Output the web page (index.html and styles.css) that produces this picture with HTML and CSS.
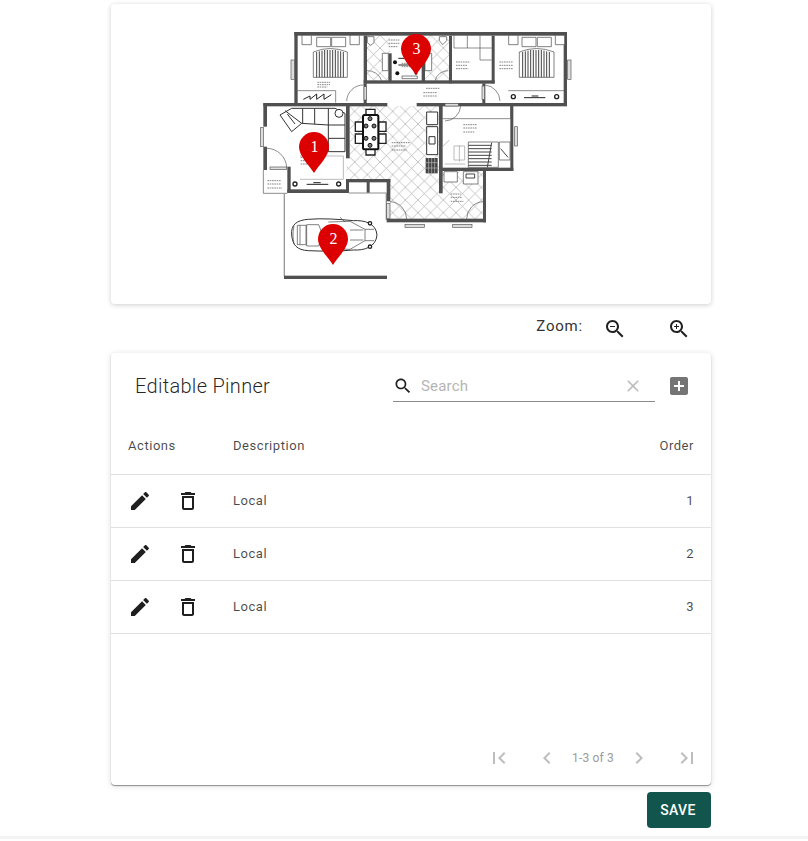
FILE: index.html
```html
<!DOCTYPE html>
<html lang="en">
<head>
<meta charset="utf-8">
<title>Editable Pinner</title>
<link rel="stylesheet" href="styles.css">
</head>
<body>
<svg class="defs" aria-hidden="true">
  <symbol id="i-zoom-out" viewBox="0 0 24 24"><path d="M15.5 14h-.79l-.28-.27C15.41 12.59 16 11.11 16 9.5 16 5.91 13.09 3 9.5 3S3 5.91 3 9.5 5.91 16 9.5 16c1.61 0 3.09-.59 4.23-1.57l.27.28v.79l5 4.99L20.49 19l-4.99-5zm-6 0C7.01 14 5 11.99 5 9.5S7.01 5 9.5 5 14 7.01 14 9.5 11.99 14 9.5 14zM7 9h5v1H7z"/></symbol>
  <symbol id="i-zoom-in" viewBox="0 0 24 24"><path d="M15.5 14h-.79l-.28-.27C15.41 12.59 16 11.11 16 9.5 16 5.91 13.09 3 9.5 3S3 5.91 3 9.5 5.91 16 9.5 16c1.61 0 3.09-.59 4.23-1.57l.27.28v.79l5 4.99L20.49 19l-4.99-5zm-6 0C7.01 14 5 11.99 5 9.5S7.01 5 9.5 5 14 7.01 14 9.5 11.99 14 9.5 14z"/><path d="M12 10h-2v2H9v-2H7V9h2V7h1v2h2v1z"/></symbol>
  <symbol id="i-search" viewBox="0 0 24 24"><path d="M15.5 14h-.79l-.28-.27C15.41 12.59 16 11.11 16 9.5 16 5.91 13.09 3 9.5 3S3 5.91 3 9.5 5.91 16 9.5 16c1.61 0 3.09-.59 4.23-1.57l.27.28v.79l5 4.99L20.49 19l-4.99-5zm-6 0C7.01 14 5 11.99 5 9.5S7.01 5 9.5 5 14 7.01 14 9.5 11.99 14 9.5 14z"/></symbol>
  <symbol id="i-clear" viewBox="0 0 24 24"><path d="M19 6.41L17.59 5 12 10.59 6.41 5 5 6.41 10.59 12 5 17.59 6.41 19 12 13.41 17.59 19 19 17.59 13.41 12z"/></symbol>
  <symbol id="i-add" viewBox="0 0 24 24"><path d="M19 3H5c-1.11 0-2 .9-2 2v14c0 1.1.89 2 2 2h14c1.1 0 2-.9 2-2V5c0-1.1-.9-2-2-2zm-2 10h-4v4h-2v-4H7v-2h4V7h2v4h4v2z"/></symbol>
  <symbol id="i-edit" viewBox="0 0 24 24"><path d="M3 17.25V21h3.75L17.81 9.94l-3.75-3.75L3 17.25zM20.71 7.04c.39-.39.39-1.02 0-1.41l-2.34-2.34c-.39-.39-1.02-.39-1.41 0l-1.83 1.83 3.75 3.75 1.83-1.83z"/></symbol>
  <symbol id="i-delete" viewBox="0 0 24 24"><path d="M6 19c0 1.1.9 2 2 2h8c1.1 0 2-.9 2-2V7H6v12zM8 9h8v10H8V9zm7.5-5l-1-1h-5l-1 1H5v2h14V4h-3.5z"/></symbol>
  <symbol id="i-first" viewBox="0 0 24 24"><path d="M18.41 16.59L13.82 12l4.59-4.59L17 6l-6 6 6 6zM6 6h2v12H6z"/></symbol>
  <symbol id="i-prev" viewBox="0 0 24 24"><path d="M15.41 7.41L14 6l-6 6 6 6 1.41-1.41L10.83 12z"/></symbol>
  <symbol id="i-next" viewBox="0 0 24 24"><path d="M10 6L8.59 7.41 13.17 12l-4.58 4.59L10 18l6-6z"/></symbol>
  <symbol id="i-last" viewBox="0 0 24 24"><path d="M5.59 7.41L10.18 12l-4.59 4.59L7 18l6-6-6-6zM16 6h2v12h-2z"/></symbol>
  <symbol id="i-pin" viewBox="0 0 30 41"><path d="M15 0A15 15 0 0 1 30 15C30 24 20 33 15 41C10 33 0 24 0 15A15 15 0 0 1 15 0Z"/></symbol>
</svg>

<main class="page">
  <section class="card map-card">
    <div class="map">
      <svg class="plan" viewBox="0 12 966 780" width="322" height="260" aria-hidden="true">
        <defs>
          <pattern id="hatch" width="38" height="38" patternUnits="userSpaceOnUse" patternTransform="translate(10 8)">
            <path class="hatch-line" d="M0 0L38 38M38 0L0 38"/>
          </pattern>
        </defs>
        <!-- tiled floors -->
        <polygon class="tile" points="298,258 568,258 568,452 705,452 705,600 420,600 420,480 290,480 290,415 298,415"/>
        <rect class="tile" x="350" y="46" width="70" height="136"/>
        <rect class="tile" x="520" y="46" width="78" height="136"/>
        <rect class="white" x="350" y="192" width="348" height="56"/>

        <!-- thin outlines -->
        <path class="thin" d="M40 450V520H112M296 519H410M612 46V84H725M652 46V84M690 46V120H725M578 296H782V258M143 212H257V248M775 212H942"/>
        <path class="garage" d="M103 520V768M409 520V600"/>

        <!-- walls -->
        <g class="wall">
          <rect x="133" y="36" width="818" height="11"/>
          <rect x="133" y="36" width="10" height="214"/>
          <rect x="941" y="36" width="10" height="222"/>
          <rect x="40" y="249" width="372" height="10"/>
          <rect x="500" y="249" width="451" height="10"/>
          <rect x="40" y="250" width="11" height="70"/>
          <rect x="40" y="380" width="11" height="70"/>
          <rect x="112" y="440" width="10" height="78"/>
          <rect x="112" y="508" width="184" height="11"/>
          <rect x="288" y="258" width="11" height="157"/>
          <rect x="288" y="477" width="133" height="10"/>
          <rect x="288" y="477" width="9" height="41"/>
          <rect x="350" y="477" width="9" height="41"/>
          <rect x="410" y="477" width="11" height="67"/>
          <rect x="410" y="596" width="298" height="11"/>
          <rect x="699" y="452" width="9" height="155"/>
          <rect x="567" y="258" width="11" height="262"/>
          <rect x="567" y="443" width="223" height="10"/>
          <rect x="781" y="258" width="9" height="195"/>
          <rect x="341" y="47" width="10" height="143"/>
          <rect x="341" y="181" width="393" height="10"/>
          <rect x="597" y="47" width="9" height="143"/>
          <rect x="725" y="47" width="9" height="143"/>
          <rect x="415" y="100" width="10" height="86"/>
          <rect x="515" y="100" width="10" height="86"/>
          <rect x="102" y="767" width="309" height="10"/>
          <rect x="341" y="190" width="9" height="60"/>
          <rect x="697" y="190" width="9" height="60"/>
        </g>

        <!-- doors and windows -->
        <path class="door" d="M290 243A50 50 0 0 1 342 195M750 243A50 50 0 0 0 706 195M585 303A48 48 0 0 0 632 258M50 385A60 60 0 0 1 110 442M420 545A52 52 0 0 1 470 597M650 597A52 52 0 0 1 700 545M350 152A45 45 0 0 1 395 182M595 152A40 40 0 0 0 555 182"/>
        <g class="win">
          <rect x="123" y="120" width="10" height="58"/>
          <rect x="953" y="120" width="10" height="58"/>
          <rect x="32" y="322" width="8" height="58"/>
          <rect x="794" y="320" width="8" height="58"/>
          <rect x="465" y="613" width="58" height="9"/>
          <rect x="608" y="613" width="58" height="9"/>
          <rect x="342" y="200" width="8" height="40"/>
          <rect x="696" y="198" width="8" height="40"/>
          <rect x="410" y="550" width="10" height="45"/>
          <rect x="585" y="250" width="40" height="8"/>
          <rect x="60" y="441" width="50" height="7"/>
        </g>

        <!-- bedroom left -->
        <path class="furn" d="M156 46H184V74H156ZM300 46H328V74H300ZM200 52H242V80H200ZM245 52H287V80H245ZM190 96Q240 75 292 96V172H190Z"/>
        <path class="stripes" d="M200 96V172M208 94V172M216 92V172M224 90V172M232 90V172M240 90V172M248 90V172M256 90V172M264 92V172M272 94V172M280 96V172"/>
        <path class="heavy" d="M160 238L180 228L180 238L200 222L200 238L222 222L222 238L244 224"/>
        <!-- bedroom right -->
        <path class="furn" d="M776 46H804V74H776ZM916 46H944V74H916ZM816 52H858V80H816ZM862 52H904V80H862ZM808 96Q860 75 912 96V172H808Z"/>
        <path class="stripes" d="M818 96V172M826 94V172M834 92V172M842 90V172M850 90V172M858 90V172M866 90V172M874 90V172M882 92V172M890 94V172M898 96V172"/>
        <path class="heavy" d="M822 233H886M845 228H865"/>
        <circle class="lamp" cx="790" cy="230" r="6"/>
        <circle class="lamp" cx="920" cy="230" r="6"/>

        <!-- bath -->
        <path class="furn" d="M352 50H372V68L362 76L352 68ZM568 50H590V62L578 74L568 62ZM397 100H415V152H397ZM525 100H545V152H525ZM456 168H502V176H456Z"/>
        <circle class="dot" cx="435" cy="127" r="6"/>
        <circle class="dot" cx="442" cy="160" r="6"/>
        <circle class="dot" cx="498" cy="160" r="4"/>
        <path class="heavy" d="M445 115H510M445 135H510"/>

        <!-- living room -->
        <path class="sofa" d="M90 285L125 265H255L285 280V395H235V315L155 310L125 335ZM155 310L105 272M235 315L285 315M158 266V310M194 266V312M235 266V315M235 355H285M112 282L135 312"/>
        <circle class="sofa" cx="267" cy="280" r="12"/>
        <path class="soft" d="M150 408H280V478H150"/>
        <circle class="lamp" cx="135" cy="492" r="6"/>
        <circle class="lamp" cx="266" cy="492" r="6"/>
        <path class="heavy" d="M170 493H235M190 488H212"/>

        <!-- dining -->
        <path class="chair" d="M316 306H338V334H316ZM316 342H338V370H316ZM386 306H408V334H386ZM386 342H408V370H386ZM348 268H375V285H348ZM348 388H375V405H348Z"/>
        <rect class="table" x="339" y="285" width="46" height="103" rx="5"/>
        <g class="plate">
          <circle cx="360" cy="296" r="6"/>
          <circle cx="348" cy="318" r="6"/><circle cx="372" cy="318" r="6"/>
          <circle cx="348" cy="355" r="6"/><circle cx="372" cy="355" r="6"/>
          <circle cx="360" cy="376" r="6"/>
        </g>

        <!-- kitchen counter -->
        <path class="counter" d="M530 276H563V314H530ZM530 320H563V404H530ZM537 350H555V372H537Z"/>
        <rect class="stove" x="527" y="414" width="36" height="46"/>
        <path class="stove-grid" d="M527 428H563M527 444H563M545 414V460M536 414V460M554 414V460"/>

        <!-- right room -->
        <path class="furn" d="M655 366H745V442H655ZM748 366H780V420H748Z"/>
        <path class="heavy-thin" d="M655 376H725M655 386H725M655 396H725M655 406H725M655 416H725M655 426H725M655 436H725M725 368L712 442M752 386L774 412"/>
        <path class="soft" d="M612 378H644V420H612ZM628 375V425M578 380L598 360M584 432H646"/>
        <path class="furn" d="M582 455H622V486H582ZM640 455H684V492H640Z"/>
        <path class="heavy-thin" d="M648 462H674V474H648Z"/>

        <!-- car -->
        <path class="car" d="M125 645C122 615 140 600 175 598C215 594 270 598 310 602C345 600 378 610 381 645C378 680 345 692 310 690C270 694 215 694 175 692C140 690 128 675 125 645Z"/>
        <path class="car-thin" d="M132 618C128 635 128 655 132 672M142 616H168V674H142ZM150 616V674M170 614H206L218 645L206 678H170ZM235 606L300 604L345 628V662L300 688L235 686M345 628H372M345 662H372M270 592L285 606M270 696L285 684M300 630H340M300 660H340"/>
        <circle class="lamp" cx="360" cy="610" r="5"/>
        <circle class="lamp" cx="360" cy="680" r="5"/>

        <!-- small labels as faint marks -->
        <path class="marks" d="M202 187H240M202 194H240M202 201H232M618 126H660M618 136H652M618 146H655M748 126H788M748 136H790M748 146H790M528 205H568M520 218H560M520 228H562M640 314H680M640 324H680M640 336H675M425 368H480M425 378H468M425 390H470M152 412H186M152 422H182M152 432H186M52 482H92M52 492H92M52 504H96M602 522H632M602 532H636M602 544H640M416 60H448M416 70H448M416 80H444M455 130H495M455 140H495"/>
      </svg>
      <span class="pin pin-one"><svg class="pin-shape"><use href="#i-pin"/></svg><b class="pin-num">1</b></span>
      <span class="pin pin-two"><svg class="pin-shape"><use href="#i-pin"/></svg><b class="pin-num">2</b></span>
      <span class="pin pin-three"><svg class="pin-shape"><use href="#i-pin"/></svg><b class="pin-num">3</b></span>
    </div>
  </section>

  <div class="zoom-row">
    <span class="zoom-label">Zoom:</span>
    <span class="zoom-btn"><svg class="icon"><use href="#i-zoom-out"/></svg></span>
    <span class="zoom-btn"><svg class="icon"><use href="#i-zoom-in"/></svg></span>
  </div>

  <section class="card table-card">
    <header class="toolbar">
      <h2 class="title">Editable Pinner</h2>
      <div class="search">
        <svg class="icon search-icon"><use href="#i-search"/></svg>
        <span class="placeholder">Search</span>
        <svg class="icon clear-icon"><use href="#i-clear"/></svg>
      </div>
      <svg class="icon add-icon"><use href="#i-add"/></svg>
    </header>

    <div class="row head">
      <span class="col-actions">Actions</span>
      <span class="col-desc">Description</span>
      <span class="col-order">Order</span>
    </div>
    <div class="row">
      <span class="col-actions"><svg class="icon"><use href="#i-edit"/></svg><svg class="icon"><use href="#i-delete"/></svg></span>
      <span class="col-desc">Local</span>
      <span class="col-order">1</span>
    </div>
    <div class="row">
      <span class="col-actions"><svg class="icon"><use href="#i-edit"/></svg><svg class="icon"><use href="#i-delete"/></svg></span>
      <span class="col-desc">Local</span>
      <span class="col-order">2</span>
    </div>
    <div class="row">
      <span class="col-actions"><svg class="icon"><use href="#i-edit"/></svg><svg class="icon"><use href="#i-delete"/></svg></span>
      <span class="col-desc">Local</span>
      <span class="col-order">3</span>
    </div>

    <footer class="pager">
      <span class="pager-btn"><svg class="icon"><use href="#i-first"/></svg></span>
      <span class="pager-btn"><svg class="icon"><use href="#i-prev"/></svg></span>
      <span class="pager-label">1-3 of 3</span>
      <span class="pager-btn"><svg class="icon"><use href="#i-next"/></svg></span>
      <span class="pager-btn"><svg class="icon"><use href="#i-last"/></svg></span>
    </footer>
  </section>

  <div class="actions">
    <button class="save" type="button">SAVE</button>
  </div>
</main>
<div class="page-end"></div>
</body>
</html>
```
FILE: styles.css
```css
* { box-sizing: border-box; }
html, body { margin: 0; padding: 0; }
body {
  background: #fff;
  font-family: Roboto, "Liberation Sans", sans-serif;
  color: rgba(0, 0, 0, .87);
  height: 841px;
  overflow: hidden;
}
.defs { width: 0; height: 0; position: absolute; }
.icon { width: 24px; height: 24px; display: block; fill: currentColor; }

.page { width: 600px; margin-left: 111px; padding-top: 4px; }
.card { background: #fff; border-radius: 4px; }

/* map */
.map-card {
  height: 300px;
  display: flex; align-items: center; justify-content: center;
  box-shadow: 0 1px 5px rgba(0,0,0,.2);
}
.map { position: relative; width: 322px; height: 260px; }
.plan { display: block; filter: blur(.35px); }
.tile { fill: url(#hatch); }
.hatch-line { stroke: #aaa; stroke-width: 2; fill: none; }
.white { fill: #fff; }
.wall rect { fill: #505050; }
.thin { fill: none; stroke: #555; stroke-width: 2; }
.garage { fill: none; stroke: #999; stroke-width: 4; }
.door { fill: none; stroke: #555; stroke-width: 2; }
.win rect { fill: #ddd; stroke: #555; stroke-width: 2; }
.furn { fill: #fff; stroke: #444; stroke-width: 2; }
.sofa { fill: #fff; stroke: #333; stroke-width: 3; }
.stripes { fill: none; stroke: #444; stroke-width: 3; }
.heavy { fill: none; stroke: #222; stroke-width: 3; }
.heavy-thin { fill: none; stroke: #444; stroke-width: 3; }
.soft { fill: none; stroke: #bbb; stroke-width: 3; }
.lamp { fill: #fff; stroke: #222; stroke-width: 4; }
.dot { fill: #111; }
.table { fill: #fff; stroke: #111; stroke-width: 6; }
.chair { fill: #fff; stroke: #222; stroke-width: 4; }
.plate circle { fill: #777; stroke: #111; stroke-width: 3; }
.counter { fill: #fff; stroke: #333; stroke-width: 3; }
.stove { fill: #444; }
.stove-grid { fill: none; stroke: #bbb; stroke-width: 2; }
.car { fill: #fff; stroke: #333; stroke-width: 3; }
.car-thin { fill: none; stroke: #444; stroke-width: 2; }
.marks { fill: none; stroke: #888; stroke-width: 3; stroke-dasharray: 5 2; }

.pin { position: absolute; width: 30px; height: 41px; }
.pin-one { left: 49px; top: 108px; }
.pin-two { left: 68px; top: 200px; }
.pin-three { left: 151px; top: 10px; }
.pin-shape { display: block; width: 30px; height: 41px; fill: #dd0000; }
.pin-num {
  position: absolute;
  left: 1px; right: 0; top: 5px;
  text-align: center;
  color: #fff;
  font: 400 16px/20px "Liberation Serif", serif;
}

/* zoom row */
.zoom-row { display: flex; align-items: center; justify-content: flex-end; height: 49px; color: #222; }
.zoom-label { font-size: 15px; font-weight: 400; letter-spacing: .8px; position: relative; top: -3px; color: #333; }
.zoom-btn { width: 64px; display: flex; justify-content: center; }

/* table */
.table-card {
  height: 432px;
  display: flex; flex-direction: column;
  box-shadow: 0 1px 1px rgba(0,0,0,.4), 0 1px 6px rgba(0,0,0,.14);
}
.toolbar { height: 64px; display: flex; align-items: center; padding: 2px 0 0 24px; flex: none; }
.title { margin: 0; font-size: 20px; font-weight: 300; letter-spacing: .3px; width: 258px; }
.search {
  width: 262px; height: 32px;
  display: flex; align-items: center;
  border-bottom: 1px solid #8c8c8c;
  color: #222;
}
.search-icon { width: 20px; height: 20px; }
.placeholder { margin-left: 8px; font-size: 15px; letter-spacing: .2px; color: #b5b5b5; flex: 1; }
.clear-icon { width: 20px; height: 20px; color: #bdbdbd; margin-right: 12px; }
.add-icon { margin-left: 12px; color: #757575; }

.row {
  display: flex; align-items: center;
  height: 53px;
  padding: 0 17px;
  border-bottom: 1px solid #e0e0e0;
  font-size: 13px;
  letter-spacing: .55px;
  color: rgba(0,0,0,.72);
  flex: none;
}
.row.head { height: 58px; }
.col-actions { width: 105px; display: flex; gap: 24px; color: #1f1f1f; }
.head .col-actions { color: rgba(0,0,0,.72); }
.col-desc { flex: 1; }
.col-order { text-align: right; }
.row:not(.head) .col-desc, .row:not(.head) .col-order { margin-top: -2px; }

.pager { margin-top: auto; margin-bottom: 3px; height: 48px; display: flex; align-items: center; justify-content: flex-end; flex: none; color: #bdbdbd; }
.pager-btn { width: 48px; display: flex; justify-content: center; }
.pager-label { width: 44px; text-align: center; font-size: 12px; letter-spacing: .2px; color: #9a9a9a; white-space: nowrap; }

.actions { display: flex; justify-content: flex-end; margin-top: 7px; }
.save {
  width: 64px; height: 36px;
  padding: 0 2px 0 0;
  background: #11554c; color: #fff;
  border: 0; border-radius: 4px;
  font: 500 14px Roboto, "Liberation Sans", sans-serif;
  letter-spacing: .4px;
}
.page-end { margin-top: 8px; height: 3px; background: #f3f3f3; }
```
